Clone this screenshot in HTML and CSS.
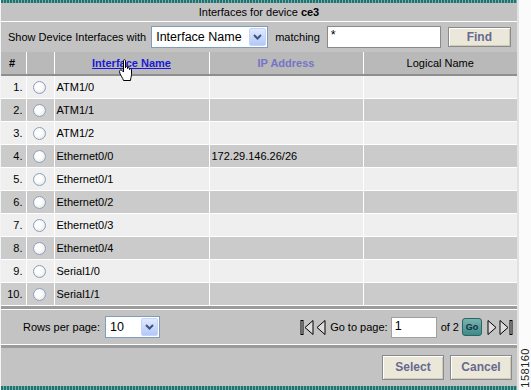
FILE: index.html
```html
<!doctype html>
<html lang="en">
    <head>
        <meta charset="utf-8">
        <title>Interfaces for device ce3</title>
        <link rel="stylesheet" href="styles.css">
    </head>
    <body>
        <div class="page">
            <div class="panel">
                <div class="teal"></div>
                <div class="title">Interfaces for device <b>ce3</b></div>
                <div class="filter">
                    <span>Show Device Interfaces with</span>
                    <div class="select wide"><span>Interface Name</span><span class="arrow"><svg width="9" height="6" viewBox="0 0 9 6"><path d="M1 1 L4.5 4.5 L8 1" fill="none" stroke="#3d5488" stroke-width="2"/></svg></span></div>
                    <span class="gap">matching</span>
                    <div class="input match">*</div>
                    <div class="btn find">Find</div>
                </div>
                <table class="grid">
                    <colgroup>
                        <col style="width:25px"><col style="width:28px"><col style="width:155px"><col style="width:154px"><col style="width:154px">
                    </colgroup>
                    <thead>
                        <tr>
                            <th class="num">#</th>
                            <th></th>
                            <th><a class="sort" href="#">Interface Name</a></th>
                            <th class="ip">IP Address</th>
                            <th class="plain">Logical Name</th>
                        </tr>
                    </thead>
                    <tbody>
                        <tr><td class="num">1.</td><td><div class="radio"></div></td><td>ATM1/0</td><td></td><td></td></tr>
                        <tr><td class="num">2.</td><td><div class="radio"></div></td><td>ATM1/1</td><td></td><td></td></tr>
                        <tr><td class="num">3.</td><td><div class="radio"></div></td><td>ATM1/2</td><td></td><td></td></tr>
                        <tr><td class="num">4.</td><td><div class="radio"></div></td><td>Ethernet0/0</td><td>172.29.146.26/26</td><td></td></tr>
                        <tr><td class="num">5.</td><td><div class="radio"></div></td><td>Ethernet0/1</td><td></td><td></td></tr>
                        <tr><td class="num">6.</td><td><div class="radio"></div></td><td>Ethernet0/2</td><td></td><td></td></tr>
                        <tr><td class="num">7.</td><td><div class="radio"></div></td><td>Ethernet0/3</td><td></td><td></td></tr>
                        <tr><td class="num">8.</td><td><div class="radio"></div></td><td>Ethernet0/4</td><td></td><td></td></tr>
                        <tr><td class="num">9.</td><td><div class="radio"></div></td><td>Serial1/0</td><td></td><td></td></tr>
                        <tr><td class="num">10.</td><td><div class="radio"></div></td><td>Serial1/1</td><td></td><td></td></tr>
                    </tbody>
                </table>
                <div class="band"></div>
                <div class="pager">
                    <div class="rows">
                        <span>Rows per page:</span>
                        <div class="select small"><span>10</span><span class="arrow"><svg width="9" height="6" viewBox="0 0 9 6"><path d="M1 1 L4.5 4.5 L8 1" fill="none" stroke="#3d5488" stroke-width="2"/></svg></span></div>
                    </div>
                    <div class="nav">
                        <svg width="14" height="17" viewBox="0 0 14 17"><rect x="1" y="1.5" width="2" height="14" fill="#ddd" stroke="#000"/><path d="M13 1.5 L5 8.5 L13 15.5 Z" fill="#ddd" stroke="#000"/></svg>
                        <svg class="prev" width="10" height="17" viewBox="0 0 10 17"><path d="M9 1.5 L1 8.5 L9 15.5 Z" fill="#ddd" stroke="#000"/></svg>
                        <span class="goto">Go to page:</span>
                        <div class="input page-no">1</div>
                        <span class="of">of 2</span>
                        <div class="go">Go</div>
                        <svg class="next" width="10" height="17" viewBox="0 0 10 17"><path d="M1 1.5 L9 8.5 L1 15.5 Z" fill="#ddd" stroke="#000"/></svg>
                        <svg class="last" width="14" height="17" viewBox="0 0 14 17"><path d="M1 1.5 L9 8.5 L1 15.5 Z" fill="#ddd" stroke="#000"/><rect x="11" y="1.5" width="2" height="14" fill="#ddd" stroke="#000"/></svg>
                    </div>
                </div>
                <div class="band low"></div>
                <div class="actions">
                    <div class="btn big">Select</div>
                    <div class="btn big">Cancel</div>
                </div>
                <div class="teal bottom"></div>
            </div>
            <div class="strip"><span>158160</span></div>
        </div>
        <svg class="hand" width="17" height="23" viewBox="0 0 17 23"><path d="M5.5 1.5 C5.5 0.5 7.5 0.5 7.5 1.5 L7.5 9 L7.5 8 C7.5 7 9.5 7 9.5 8 L9.5 9.5 C9.5 8.5 11.5 8.5 11.5 9.5 L11.5 10.5 C11.5 9.5 13.5 9.5 13.5 10.5 L13.5 15.5 C13.5 18 12.5 19 12.5 21.5 L5.5 21.5 C5 19 1.5 15.5 1.5 12.5 C1.5 11 3 10.5 4 11.5 L5.5 13 Z" fill="#fff" stroke="#000"/></svg>
    </body>
</html>
```

FILE: styles.css
```css
body {
    margin: 0;
    font-family: "Liberation Sans", Arial, sans-serif;
    font-size: 11px;
    color: #000;
    background: #fff;
}
.page {
    display: flex;
    width: 531px;
    height: 390px;
}
.panel {
    width: 516px;
    border-left: 1px solid #f4f4f4;
    background: #c3c3c3;
    display: flex;
    flex-direction: column;
}
.teal {
    height: 3px;
    background: repeating-linear-gradient(90deg, #237471 0 2px, #6fb0ac 2px 3px);
}
.teal.bottom {
    height: 4px;
}
.title {
    height: 18px;
    line-height: 18px;
    text-align: center;
    border-bottom: 1px solid #fff;
}
.filter {
    height: 30px;
    display: flex;
    align-items: center;
    padding-left: 7px;
}
.select {
    display: flex;
    align-items: center;
    justify-content: space-between;
    box-sizing: border-box;
    background: #fff;
    border: 1px solid #7f9db9;
    font-size: 12.5px;
    padding-left: 4px;
}
.select .arrow {
    display: flex;
    align-items: center;
    justify-content: center;
    width: 15px;
    align-self: stretch;
    margin: 1px;
    border-radius: 2px;
    background: linear-gradient(#e1eafd, #b4c8f6);
    border: 1px solid #c3d3fd;
}
.select.wide {
    margin-left: 5px;
    width: 117px;
    height: 22px;
}
.select.small {
    margin-left: 5px;
    width: 55px;
    height: 22px;
}
.gap {
    margin-left: 7px;
}
.input {
    box-sizing: border-box;
    background: #fff;
    border: 1px solid #8a8a8a;
    font-size: 12.5px;
    padding: 1px 3px;
}
.input.match {
    margin-left: 7px;
    width: 114px;
    height: 22px;
}
.btn {
    box-sizing: border-box;
    display: flex;
    align-items: center;
    justify-content: center;
    background: #ebe8d9;
    border: 1px solid #8a8a8a;
    box-shadow: inset 1px 1px 0 #fff, inset -1px -1px 0 #cfcbb8;
    color: #686890;
    font-weight: bold;
    font-size: 12px;
}
.btn.find {
    margin-left: 7px;
    width: 63px;
    height: 20px;
}
.btn.big {
    width: 62px;
    height: 25px;
}
.grid {
    width: 516px;
    table-layout: fixed;
    border-collapse: collapse;
}
.grid th {
    height: 22px;
    padding: 0;
    background: #b9b9b9;
    border-left: 1px solid #fff;
    border-bottom: 2px solid #8e8e8e;
    font-weight: bold;
    text-align: center;
}
.grid th:first-child, .grid td:first-child {
    border-left: none;
}
.grid th.num {
    text-align: left;
    padding-left: 8px;
}
.grid th.plain {
    font-weight: normal;
}
.grid th.ip {
    color: #7474c6;
}
.sort {
    color: #1a1ad6;
}
.grid td {
    height: 22px;
    padding: 0 0 0 2px;
    border-left: 1px solid #fff;
    border-bottom: 1px solid #fff;
    background: #efefef;
    white-space: nowrap;
}
.grid tr:nth-child(even) td {
    background: #cbcbcb;
}
.grid td.num {
    text-align: right;
    padding: 0 3px 0 0;
}
.radio {
    width: 13px;
    height: 13px;
    margin-left: 4px;
    box-sizing: border-box;
    border-radius: 50%;
    border: 1px solid #8aa0bf;
    background: radial-gradient(circle at 40% 40%, #fff 30%, #deded8);
}
.band {
    height: 3px;
    background: #9b9b9b;
    border-bottom: 1px solid #fff;
}
.band.low {
    border-bottom: none;
    border-top: 1px solid #fff;
}
.pager {
    height: 34px;
    display: flex;
    align-items: center;
    justify-content: space-between;
    padding: 0 4px 0 22px;
}
.rows, .nav {
    display: flex;
    align-items: center;
}
.prev {
    margin-left: 2px;
}
.goto {
    margin-left: 4px;
}
.input.page-no {
    margin-left: 3px;
    width: 46px;
    height: 21px;
    border-color: #a0a0a0;
}
.of {
    margin-left: 4px;
}
.go {
    margin-left: 3px;
    width: 18px;
    height: 16px;
    border-radius: 3px;
    border: 1px solid #2c6462;
    background: linear-gradient(#7ab3af, #3f8a86);
    color: #12304a;
    font-size: 9px;
    font-weight: bold;
    text-align: center;
    line-height: 16px;
}
.next {
    margin-left: 5px;
}
.last {
    margin-left: 2px;
}
.actions {
    flex: 1;
    display: flex;
    align-items: center;
    justify-content: flex-end;
    gap: 6px;
    padding-right: 5px;
}
.strip {
    flex: 1;
    background: linear-gradient(90deg, #e2e2e2 0 2px, #fbfbfb 2px);
    display: flex;
    align-items: flex-end;
    justify-content: center;
    padding: 0 0 2px 2px;
}
.strip span {
    writing-mode: vertical-rl;
    transform: rotate(180deg);
    font-size: 11px;
    line-height: 11px;
    letter-spacing: 0.5px;
    color: #222;
}
.hand {
    position: absolute;
    left: 118px;
    top: 59px;
}
```
